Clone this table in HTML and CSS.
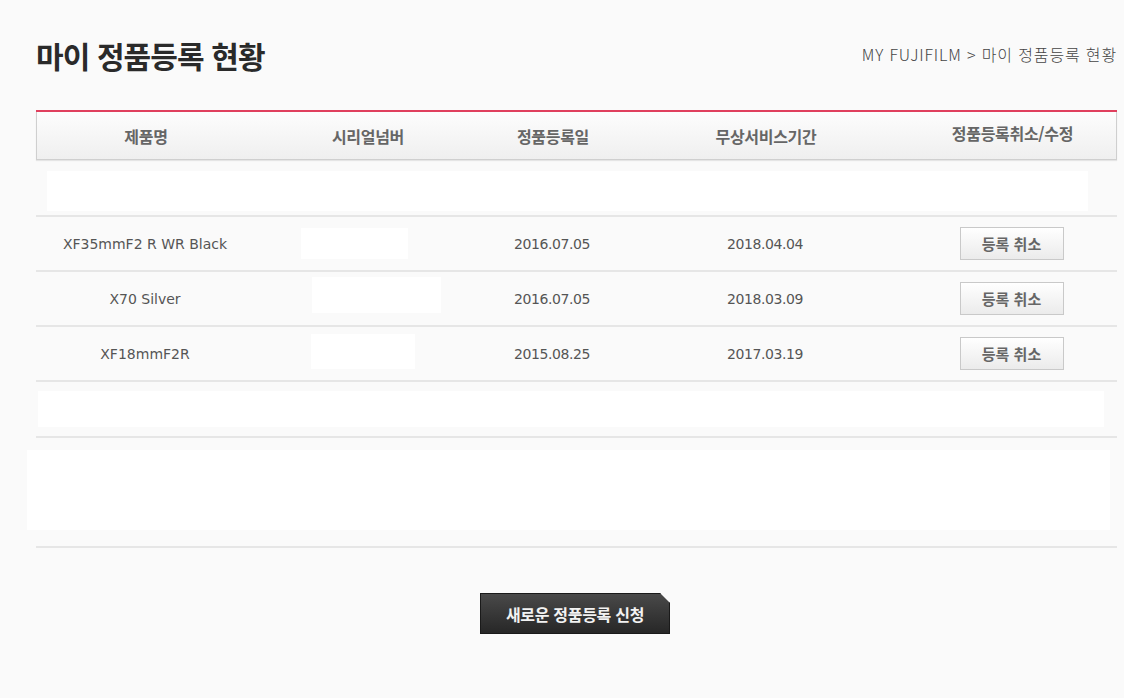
FILE: index.html
```html
<!DOCTYPE html>
<html lang="ko">
<head>
<meta charset="utf-8">
<link rel="stylesheet" href="styles.css">
</head>
<body>
<div class="page">
  <div class="head">
    <h1 class="title">마이 정품등록 현황</h1>
    <div class="crumb">MY FUJIFILM &gt; 마이 정품등록 현황</div>
  </div>
  <div class="table">
    <div class="row thead">
      <div>제품명</div>
      <div>시리얼넘버</div>
      <div>정품등록일</div>
      <div>무상서비스기간</div>
      <div class="up">정품등록취소/수정</div>
    </div>
    <div class="blank blank1"><div class="wbox"></div></div>
    <div class="row item">
      <div>XF35mmF2 R WR Black</div>
      <div class="serial"><span class="mask m1"></span></div>
      <div class="date">2016.07.05</div>
      <div class="date">2018.04.04</div>
      <div><button class="cancel">등록 취소</button></div>
    </div>
    <div class="row item">
      <div>X70 Silver</div>
      <div class="serial"><span class="mask m2"></span></div>
      <div class="date">2016.07.05</div>
      <div class="date">2018.03.09</div>
      <div><button class="cancel">등록 취소</button></div>
    </div>
    <div class="row item">
      <div>XF18mmF2R</div>
      <div class="serial"><span class="mask m3"></span></div>
      <div class="date">2015.08.25</div>
      <div class="date">2017.03.19</div>
      <div><button class="cancel">등록 취소</button></div>
    </div>
    <div class="blank blank2"><div class="wbox"></div></div>
    <div class="blank blank3"><div class="wbox"></div></div>
  </div>
  <div class="actions">
    <button class="newreg">새로운 정품등록 신청</button>
  </div>
</div>
</body>
</html>
```
FILE: styles.css
```css
html, body {
  margin: 0;
  padding: 0;
  background: #fafafa;
}
body {
  font-family: "Liberation Sans", "Noto Sans CJK KR", sans-serif;
  color: #555;
  width: 1124px;
  height: 698px;
  overflow: hidden;
}
.page {
  padding: 0 7px 0 36px;
}
.head {
  display: flex;
  justify-content: space-between;
  align-items: center;
  height: 110px;
}
.title {
  margin: 0;
  font-family: "Noto Sans CJK KR", sans-serif;
  font-size: 30px;
  font-weight: bold;
  color: #2a2a2a;
  letter-spacing: -0.9px;
}
.crumb {
  font-family: "Noto Sans CJK KR", sans-serif;
  font-size: 16px;
  font-weight: 300;
  color: #444;
  letter-spacing: 0.85px;
  position: relative;
  top: -1px;
}
.table {
  width: 1081px;
  border-top: 2px solid #e0405e;
}
.row {
  display: grid;
  grid-template-columns: 218px 226px 144px 282px 211px;
  align-items: center;
  text-align: center;
}
.thead {
  height: 47px;
  border: 1px solid #cfcfcf;
  border-top: none;
  background: linear-gradient(#fdfdfd, #efefef);
  font-family: "Noto Sans CJK KR", sans-serif;
  font-size: 16px;
  font-weight: bold;
  color: #666;
  letter-spacing: -0.3px;
  box-shadow: 0 1px 1px #e5e5e5;
}
.thead .up {
  position: relative;
  top: -3px;
}
.item {
  height: 53px;
  border-bottom: 2px solid #e6e6e6;
  font-family: "DejaVu Sans", "Noto Sans CJK KR", sans-serif;
  font-size: 14px;
  color: #555;
}
.item .date {
  letter-spacing: -0.4px;
}
.item .serial {
  align-self: stretch;
  display: flex;
  align-items: flex-start;
}
.blank {
  border-bottom: 2px solid #e6e6e6;
  display: flex;
  box-sizing: border-box;
}
.wbox {
  background: #fff;
}
.blank1 {
  height: 57px;
  padding: 11px 0 4px 11px;
}
.blank1 .wbox { width: 1041px; }
.blank2 {
  height: 56px;
  padding: 9px 0 9px 2px;
}
.blank2 .wbox { width: 1066px; }
.blank3 {
  height: 110px;
  padding: 12px 0 18px 0;
  margin-left: -9px;
  border-bottom: none;
  position: relative;
}
.blank3::after {
  content: "";
  position: absolute;
  left: 9px;
  right: 0;
  bottom: 0;
  border-bottom: 2px solid #e6e6e6;
}
.blank3 .wbox { width: 1083px; }
.mask {
  display: block;
  background: #fff;
}
.m1 { width: 107px; height: 31px; margin-left: 47px; margin-top: 11px; }
.m2 { width: 129px; height: 36px; margin-left: 58px; margin-top: 5px; }
.m3 { width: 104px; height: 35px; margin-left: 57px; margin-top: 7px; }
.cancel {
  width: 104px;
  height: 33px;
  border: 1px solid #c9c9c9;
  background: linear-gradient(#ffffff, #ebebeb);
  font-family: "Noto Sans CJK KR", sans-serif;
  font-size: 15px;
  font-weight: bold;
  color: #666;
  padding: 0;
}
.actions {
  display: flex;
  justify-content: center;
  padding-top: 45px;
  padding-right: 3px;
}
.newreg {
  width: 190px;
  height: 41px;
  border: none;
  padding: 0;
  background: linear-gradient(#4a4a4a, #262626);
  color: #f2f2f2;
  font-family: "Noto Sans CJK KR", sans-serif;
  font-size: 16px;
  font-weight: bold;
  letter-spacing: -0.3px;
  clip-path: polygon(0 0, 180px 0, 100% 10px, 100% 100%, 0 100%);
  box-shadow: inset 0 0 0 1px #1a1a1a;
}
```
